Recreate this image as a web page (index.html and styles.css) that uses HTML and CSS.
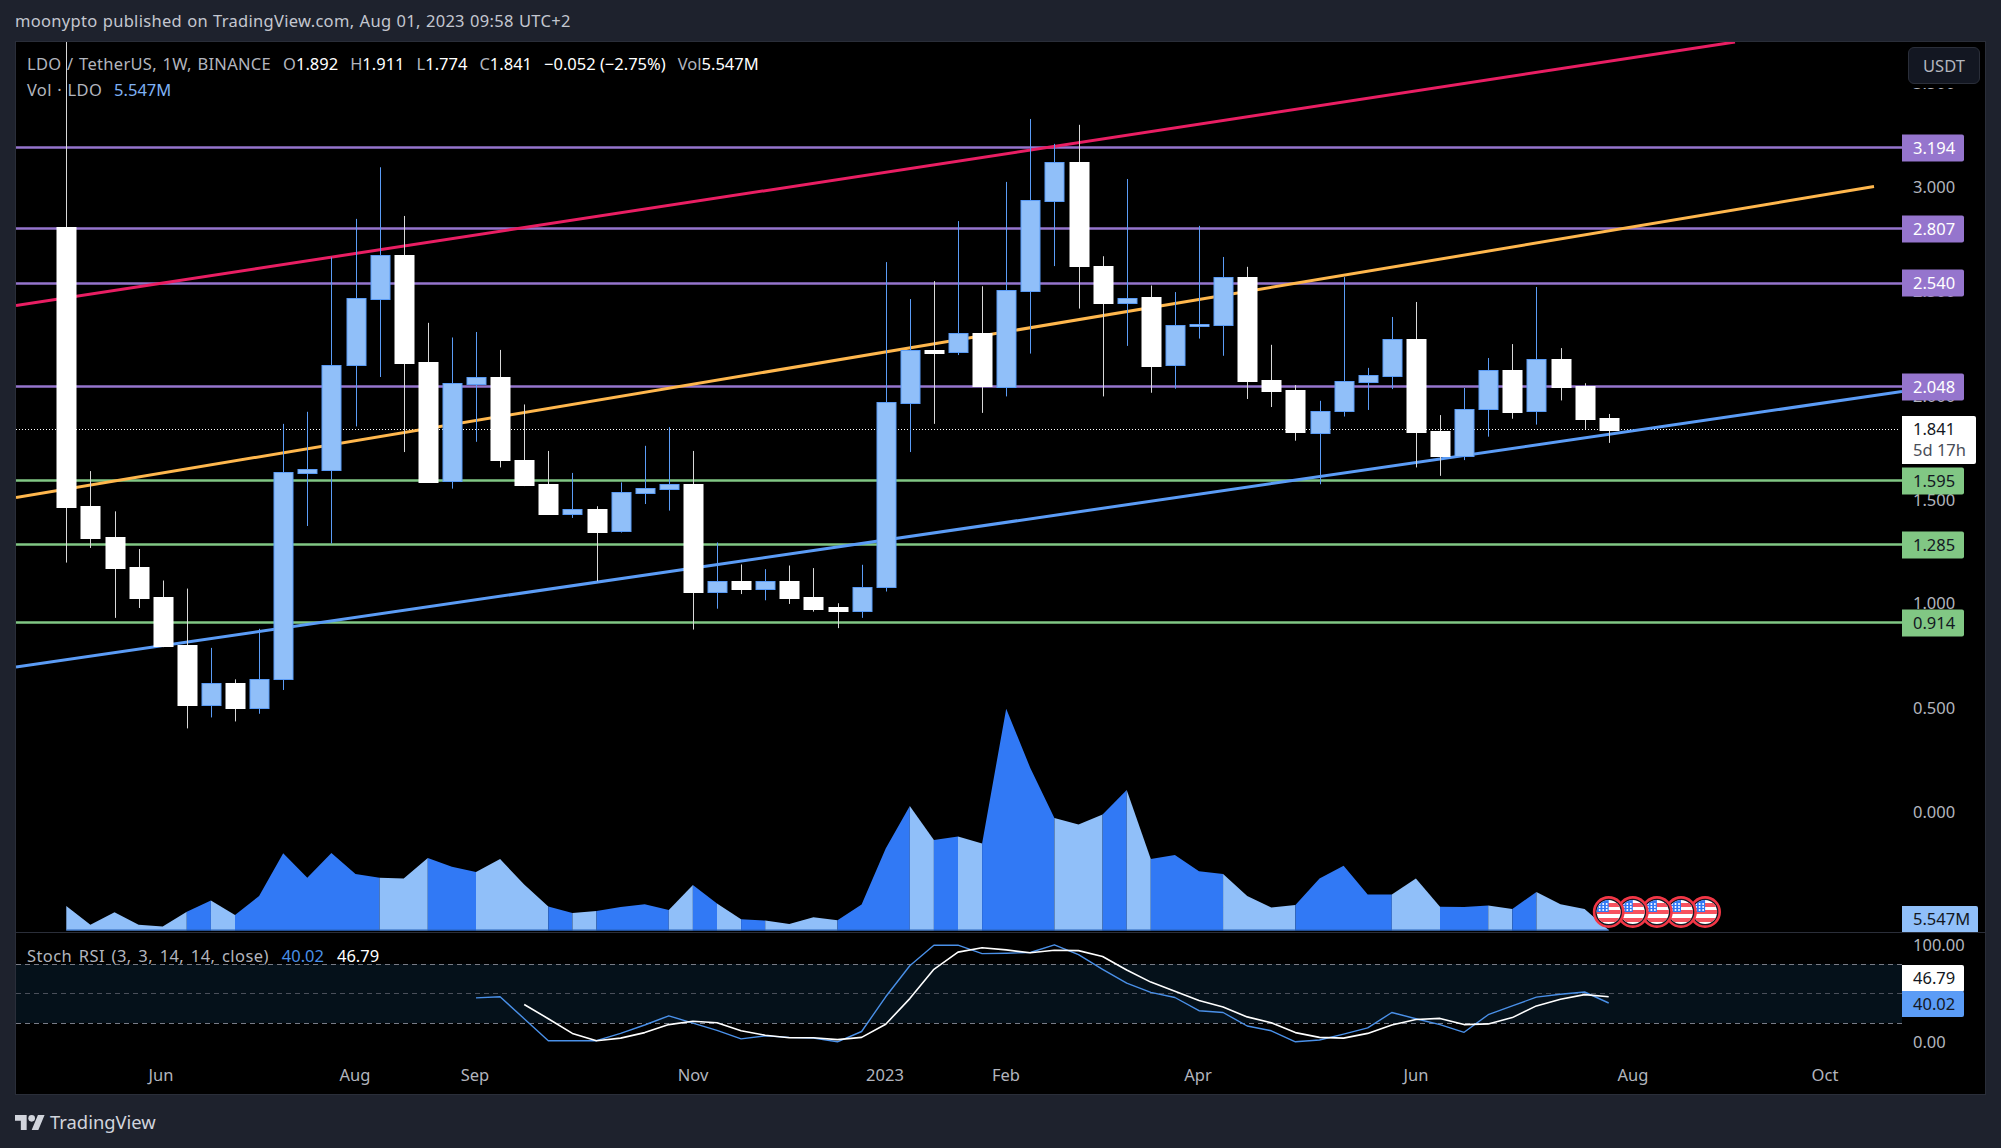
FILE: index.html
```html
<!DOCTYPE html>
<html lang="en">
<head>
<meta charset="utf-8">
<title>LDO / TetherUS chart</title>
<link rel="stylesheet" href="styles.css">
</head>
<body>
<header class="pub-bar">moonypto published on TradingView.com, Aug 01, 2023 09:58 UTC+2</header>
<main class="chart">
  <section class="pane pane-main">
    <div class="plot">
      <svg class="plot-svg" id="main-svg" viewBox="16 42 1886 890" preserveAspectRatio="none">
        <defs>
          <clipPath id="flag-clip"><circle cx="0" cy="0" r="12"/></clipPath>
          <g id="flag">
            <circle r="14.6" class="flag-ring"/>
            <g clip-path="url(#flag-clip)">
              <rect x="-13" y="-13" width="26" height="26" fill="#fff"/>
              <rect x="-13" y="-9" width="26" height="4" fill="#f7525f"/>
              <rect x="-13" y="-2" width="26" height="4" fill="#f7525f"/>
              <rect x="-13" y="6" width="26" height="4" fill="#f7525f"/>
              <rect x="-13" y="-13" width="13" height="13" fill="#3179f5"/>
              <g fill="#fff">
                <circle cx="-9" cy="-8" r="1"/><circle cx="-5.5" cy="-8" r="1"/><circle cx="-2" cy="-8" r="1"/>
                <circle cx="-9" cy="-5" r="1"/><circle cx="-5.5" cy="-5" r="1"/><circle cx="-2" cy="-5" r="1"/>
                <circle cx="-9" cy="-2" r="1"/><circle cx="-5.5" cy="-2" r="1"/><circle cx="-2" cy="-2" r="1"/>
              </g>
            </g>
          </g>
        </defs>
        <g id="volume"></g>
        <g class="levels">
          <line class="lv-purple" x1="16" x2="1902" y1="147.5" y2="147.5"/>
          <line class="lv-purple" x1="16" x2="1902" y1="228.5" y2="228.5"/>
          <line class="lv-purple" x1="16" x2="1902" y1="283.5" y2="283.5"/>
          <line class="lv-purple" x1="16" x2="1902" y1="386.5" y2="386.5"/>
          <line class="lv-green" x1="16" x2="1902" y1="480.5" y2="480.5"/>
          <line class="lv-green" x1="16" x2="1902" y1="544.5" y2="544.5"/>
          <line class="lv-green" x1="16" x2="1902" y1="622.5" y2="622.5"/>
          <line class="lv-last" x1="16" x2="1900" y1="429.5" y2="429.5"/>
          <line class="tr-pink" x1="16" y1="305.5" x2="1735" y2="42"/>
          <line class="tr-orange" x1="16" y1="497.5" x2="1874" y2="186.5"/>
          <line class="tr-blue" x1="16" y1="667" x2="1902" y2="391.5"/>
        </g>
        <g id="candles"></g>
        <g id="flags"></g>
      </svg>
      <div class="legend">
        <div class="legend-row">
          <span class="l-title">LDO / TetherUS, 1W, BINANCE</span>
          <span>O<b>1.892</b></span>
          <span>H<b>1.911</b></span>
          <span>L<b>1.774</b></span>
          <span>C<b>1.841</b></span>
          <span><b>−0.052 (−2.75%)</b></span>
          <span>Vol<b>5.547M</b></span>
        </div>
        <div class="legend-row">
          <span class="l-title">Vol · LDO</span>
          <span class="l-blue">5.547M</span>
        </div>
      </div>
    </div>
    <div class="axis">
      <span class="tick" style="top:41px">3.500</span>
      <span class="tick" style="top:145px">3.000</span>
      <span class="tick" style="top:249px">2.500</span>
      <span class="tick" style="top:354px">2.000</span>
      <span class="tick" style="top:458px">1.500</span>
      <span class="tick" style="top:561px">1.000</span>
      <span class="tick" style="top:666px">0.500</span>
      <span class="tick" style="top:770px">0.000</span>
      <span class="tag tag-purple" style="top:106px">3.194</span>
      <span class="tag tag-purple" style="top:187px">2.807</span>
      <span class="tag tag-purple" style="top:241px">2.540</span>
      <span class="tag tag-purple" style="top:345px">2.048</span>
      <span class="tag tag-green" style="top:439px">1.595</span>
      <span class="tag tag-green" style="top:503px">1.285</span>
      <span class="tag tag-green" style="top:581px">0.914</span>
      <div class="tag-last"><span>1.841</span><span class="countdown">5d 17h</span></div>
      <span class="tag tag-vol">5.547M</span>
      <button class="unit">USDT</button>
    </div>
  </section>
  <section class="pane pane-stoch">
    <div class="plot">
      <svg class="plot-svg" id="stoch-svg" viewBox="16 933 1886 127" preserveAspectRatio="none">
        <rect class="band" x="16" y="964" width="1886" height="59"/>
        <line class="dash" x1="16" x2="1902" y1="964.5" y2="964.5"/>
        <line class="dash dash-mid" x1="16" x2="1902" y1="993.5" y2="993.5"/>
        <line class="dash" x1="16" x2="1902" y1="1023.5" y2="1023.5"/>
        <polyline id="stoch-k" class="stoch-k"/>
        <polyline id="stoch-d" class="stoch-d"/>
      </svg>
      <div class="stoch-legend">
        <span class="l-title">Stoch RSI (3, 3, 14, 14, close)</span>
        <span class="l-k">40.02</span>
        <b>46.79</b>
      </div>
    </div>
    <div class="axis">
      <span class="tick" style="top:12px">100.00</span>
      <span class="tick" style="top:109px">0.00</span>
      <span class="tag tag-d">46.79</span>
      <span class="tag tag-k">40.02</span>
    </div>
  </section>
  <section class="time-axis">
    <span style="left:145px">Jun</span>
    <span style="left:339px">Aug</span>
    <span style="left:459px">Sep</span>
    <span style="left:677px">Nov</span>
    <span style="left:869px">2023</span>
    <span style="left:990px">Feb</span>
    <span style="left:1182px">Apr</span>
    <span style="left:1400px">Jun</span>
    <span style="left:1617px">Aug</span>
    <span style="left:1809px">Oct</span>
  </section>
</main>
<footer class="brand">
  <svg class="brand-logo" viewBox="0 4 36 18" aria-hidden="true"><path d="M14 22H7V11H0V4h14v18zM28 22h-8l7.5-18h8L28 22z"/><circle cx="20" cy="8" r="4"/></svg>
  <span>TradingView</span>
</footer>
<script src="app.js"></script>
</body>
</html>
```
FILE: styles.css
```css
* { box-sizing: border-box; }
html, body { margin: 0; height: 100%; }
body {
  background: #1e222d;
  color: #b2b5be;
  font-family: "Noto Sans", Lato, sans-serif;
  font-size: 16.5px;
  width: 2001px;
  height: 1148px;
  overflow: hidden;
}
.pub-bar {
  height: 41px;
  padding: 0 15px;
  display: flex;
  align-items: center;
  color: #c4c7d0;
  letter-spacing: 0.3px;
  word-spacing: 0.6px;
}
.chart {
  width: 1971px;
  height: 1054px;
  margin-left: 15px;
  border: 1px solid #2a2e39;
  background: #000;
  display: flex;
  flex-direction: column;
}
.pane { display: flex; }
.pane-main { height: 890px; box-shadow: 0 1px 0 #2a2e39; }
.pane-stoch { height: 127px; margin-top: 1px; }
.plot { position: relative; width: 1886px; height: 100%; overflow: hidden; }
.plot-svg { display: block; width: 100%; height: 100%; }
.axis { position: relative; width: 83px; height: 100%; }

.lv-purple { stroke: #9575cd; stroke-width: 2.6; }
.lv-green { stroke: #81c784; stroke-width: 2.6; }
.lv-last { stroke: #fff; stroke-width: 1; stroke-dasharray: 1 2; }
.tr-pink { stroke: #e91e63; stroke-width: 3; }
.tr-orange { stroke: #ffb74d; stroke-width: 3; }
.tr-blue { stroke: #5b9cf6; stroke-width: 3; }
.flag-ring { fill: #131722; stroke: #f23645; stroke-width: 2.6; }
.band { fill: #05111a; }
.dash { stroke: #787b86; stroke-width: 1; stroke-dasharray: 5 4; }
.dash-mid { stroke: #4a4f5a; }
.stoch-k, .stoch-d { fill: none; stroke-linejoin: round; }
.stoch-k { stroke: #4a90e8; stroke-width: 1.4; }
.stoch-d { stroke: #fff; stroke-width: 1.6; }

.legend { position: absolute; left: 11px; top: 11px; display: flex; flex-direction: column; gap: 5px; }
.legend-row { display: flex; gap: 12px; height: 21px; align-items: center; white-space: nowrap; }
.legend b, .stoch-legend b { font-weight: 400; color: #fff; }
.l-title { color: #b2b5be; letter-spacing: 0.3px; word-spacing: 1px; }
.l-blue { color: #7fb2f5; }
.stoch-legend { position: absolute; left: 11px; top: 12px; display: flex; gap: 13px; white-space: nowrap; line-height: 21px; }
.stoch-legend .l-title { letter-spacing: 0.4px; word-spacing: 2px; }
.l-k { color: #4a90e8; }

.tick, .tag { position: absolute; transform: translateY(-50%); white-space: nowrap; }
.tick { left: 11px; color: #b2b5be; margin-top: -1px; }
.tag {
  left: 0;
  width: 62px;
  height: 27px;
  line-height: 25px;
  padding-left: 11px;
  border-radius: 0 2px 2px 0;
}
.tag-purple { background: #9575cd; color: #fff; }
.tag-green { background: #81c784; color: #131722; }
.tag-last {
  position: absolute;
  left: 0;
  top: 374px;
  width: 74px;
  height: 48px;
  padding: 2px 0 0 11px;
  background: #fff;
  color: #131722;
  border-radius: 0 2px 2px 0;
  display: flex;
  flex-direction: column;
  line-height: 21px;
}
.countdown { color: #4a4e58; }
.tag-vol {
  top: auto;
  bottom: 0;
  transform: none;
  width: 76px;
  height: 26px;
  background: #90bff9;
  color: #131722;
  border-radius: 0 2px 0 0;
}
.tag-d { top: 32px; transform: none; height: 27px; background: #fff; color: #131722; }
.tag-k { top: 58px; transform: none; height: 26px; background: #5b9cf6; color: #131722; }
.unit {
  position: absolute;
  left: 6px;
  top: 5px;
  width: 72px;
  height: 37px;
  background: #131722;
  border: 1px solid #2a2e39;
  border-radius: 6px;
  color: #b2b5be;
  font: inherit;
  padding: 0;
  box-shadow: 0 4px 0 #000;
}
.time-axis { position: relative; height: 34px; flex: none; }
.time-axis span { position: absolute; top: 14px; transform: translate(-50%, -50%); color: #b2b5be; line-height: 21px; }
.brand { display: flex; align-items: center; gap: 5px; padding: 18px 0 0 15px; color: #d1d4dc; font-size: 18.4px; line-height: 18px; }
.brand-logo { width: 30px; height: 15px; fill: #d1d4dc; }
```
FILE: app.js
```js
// Geometry of the reference chart, in page pixels.
var NS = 'http://www.w3.org/2000/svg';
var X0 = 66.3, STEP = 24.1, ZY = 2.732;
function xAt(i) { return X0 + STEP * i; }
function el(parent, name, attrs) {
  var n = document.createElementNS(NS, name);
  for (var k in attrs) n.setAttribute(k, attrs[k]);
  parent.appendChild(n);
  return n;
}
// color, wick top, wick bottom, body top, body bottom (scaled vertical units)
var CANDLES = [
  ['w',113,1537,620,1385],['w',1287,1497,1382,1470],['w',1397,1688,1467,1552],['w',1500,1661,1549,1634],
  ['w',1586,1768,1631,1765],['w',1608,1990,1762,1925],['b',1770,1960,1866,1925],['w',1856,1971,1866,1933],
  ['b',1718,1950,1856,1933],['b',1158,1885,1290,1856],['b',1125,1437,1282,1291],['b',703,1485,998,1283],
  ['b',598,1165,815,998],['b',457,1030,698,818],['w',590,1235,698,991],['w',882,1318,989,1316],
  ['b',922,1335,1047,1315],['b',907,1207,1031,1048],['w',956,1277,1030,1258],['w',1105,1328,1258,1324],
  ['w',1232,1404,1323,1404],['b',1292,1415,1391,1403],['w',1383,1588,1391,1453],['b',1318,1455,1345,1452],
  ['b',1218,1377,1334,1346],['b',1167,1395,1323,1335],['w',1232,1720,1322,1618],['b',1482,1663,1588,1618],
  ['w',1542,1623,1586,1608],['b',1555,1640,1588,1608],['w',1545,1650,1588,1633],['w',1552,1671,1631,1663],
  ['w',1648,1716,1658,1668],['b',1543,1688,1605,1668],['b',716,1616,1098,1605],['b',817,1235,957,1100],
  ['w',768,1158,956,964],['b',604,970,911,963],['w',782,1128,910,1054],['b',497,1083,793,1056],
  ['b',325,966,547,794],['b',393,727,443,548],['w',341,843,443,728],['w',700,1083,728,827],
  ['b',489,945,815,827],['w',780,1073,811,999],['b',798,1062,889,996],['b',617,925,886,890],
  ['b',702,972,758,887],['w',729,1090,757,1040],['w',942,1112,1039,1067],['w',1052,1204,1065,1179],
  ['b',1095,1323,1124,1182],['b',757,1138,1042,1124],['b',1005,1120,1024,1043],['b',866,1063,927,1026],
  ['w',825,1277,926,1179],['w',1134,1300,1177,1245],['b',1060,1257,1118,1247],['b',978,1193,1012,1118],
  ['w',940,1144,1012,1125],['b',784,1160,982,1124],['w',951,1094,982,1056],['w',1047,1172,1054,1144],
  ['w',1131,1210,1143,1174]
];
var VOLUME = [907,958,924,958,963,923,892,932,880,763,830,762,820,830,832,776,800,814,779,848,908,926,921,910,902,918,850,900,943,947,956,938,946,903,750,634,727,717,736,368,530,667,684,657,590,779,768,812,820,880,911,904,832,797,876,876,832,909,910,906,915,869,902,915,973];
// Colour bands of the volume area: [from index, to index, dark?]
var BANDS = [[0,5,0],[5,6,1],[6,7,0],[7,13,1],[13,15,0],[15,17,1],[17,20,0],[20,21,1],[21,22,0],[22,25,1],[25,26,0],[26,27,1],[27,28,0],[28,29,1],[29,32,0],[32,35,1],[35,36,0],[36,37,1],[37,38,0],[38,41,1],[41,43,0],[43,44,1],[44,45,0],[45,48,1],[48,51,0],[51,55,1],[55,57,0],[57,59,1],[59,60,0],[60,61,1],[61,64,0]];
var STOCH_K = [1158,1155,1215,1275,1275,1275,1255,1232,1207,1227,1247,1270,1262,1266,1268,1278,1250,1155,1070,1014,1014,1037,1036,1034,1013,1040,1080,1118,1143,1157,1193,1198,1235,1248,1278,1273,1257,1240,1198,1215,1231,1252,1204,1180,1156,1148,1142,1172];
var STOCH_D = [1176,1215,1255,1275,1268,1253,1231,1222,1226,1248,1260,1267,1267,1272,1266,1230,1160,1080,1033,1021,1027,1035,1028,1029,1045,1082,1115,1140,1165,1183,1210,1226,1253,1266,1268,1255,1232,1217,1214,1231,1229,1212,1180,1162,1149,1155];

var volY = function (v) { return 574 + v / ZY; };
var BASE = 930.5;
var volume = document.getElementById('volume');
BANDS.forEach(function (b) {
  var pts = [xAt(b[0]).toFixed(1) + ',' + BASE];
  for (var i = b[0]; i <= b[1]; i++) pts.push(xAt(i).toFixed(1) + ',' + volY(VOLUME[i]).toFixed(1));
  pts.push(xAt(b[1]).toFixed(1) + ',' + BASE);
  el(volume, 'polygon', { points: pts.join(' '), fill: b[2] ? '#3179f5' : '#90bff9' });
});
el(volume, 'line', { x1: xAt(0), x2: xAt(64), y1: 930, y2: 930, stroke: '#2962b8', 'stroke-width': 1 });

var candles = document.getElementById('candles');
CANDLES.forEach(function (c, i) {
  var x = Math.round(xAt(i)), up = c[0] === 'b';
  var line = up ? '#5b9cf6' : '#d8d8d8', fill = up ? '#90bff9' : '#fff';
  el(candles, 'line', { x1: x + 0.5, x2: x + 0.5, y1: c[1] / ZY, y2: c[2] / ZY, stroke: line, 'stroke-width': 1 });
  var top = Math.round(c[3] / ZY), bottom = Math.round(c[4] / ZY);
  el(candles, 'rect', { x: x - 9, y: top + 0.5, width: 19, height: Math.max(bottom - top, 2), fill: fill, stroke: up ? '#5b9cf6' : '#fff', 'stroke-width': 1 });
});

var flags = document.getElementById('flags');
for (var f = 68; f >= 64; f--) el(flags, 'use', { href: '#flag', x: xAt(f), y: 912 });

function stochPoints(values, first) {
  return values.map(function (v, i) { return xAt(first + i).toFixed(1) + ',' + (574 + v / ZY).toFixed(1); }).join(' ');
}
document.getElementById('stoch-k').setAttribute('points', stochPoints(STOCH_K, 17));
document.getElementById('stoch-d').setAttribute('points', stochPoints(STOCH_D, 19));
```
